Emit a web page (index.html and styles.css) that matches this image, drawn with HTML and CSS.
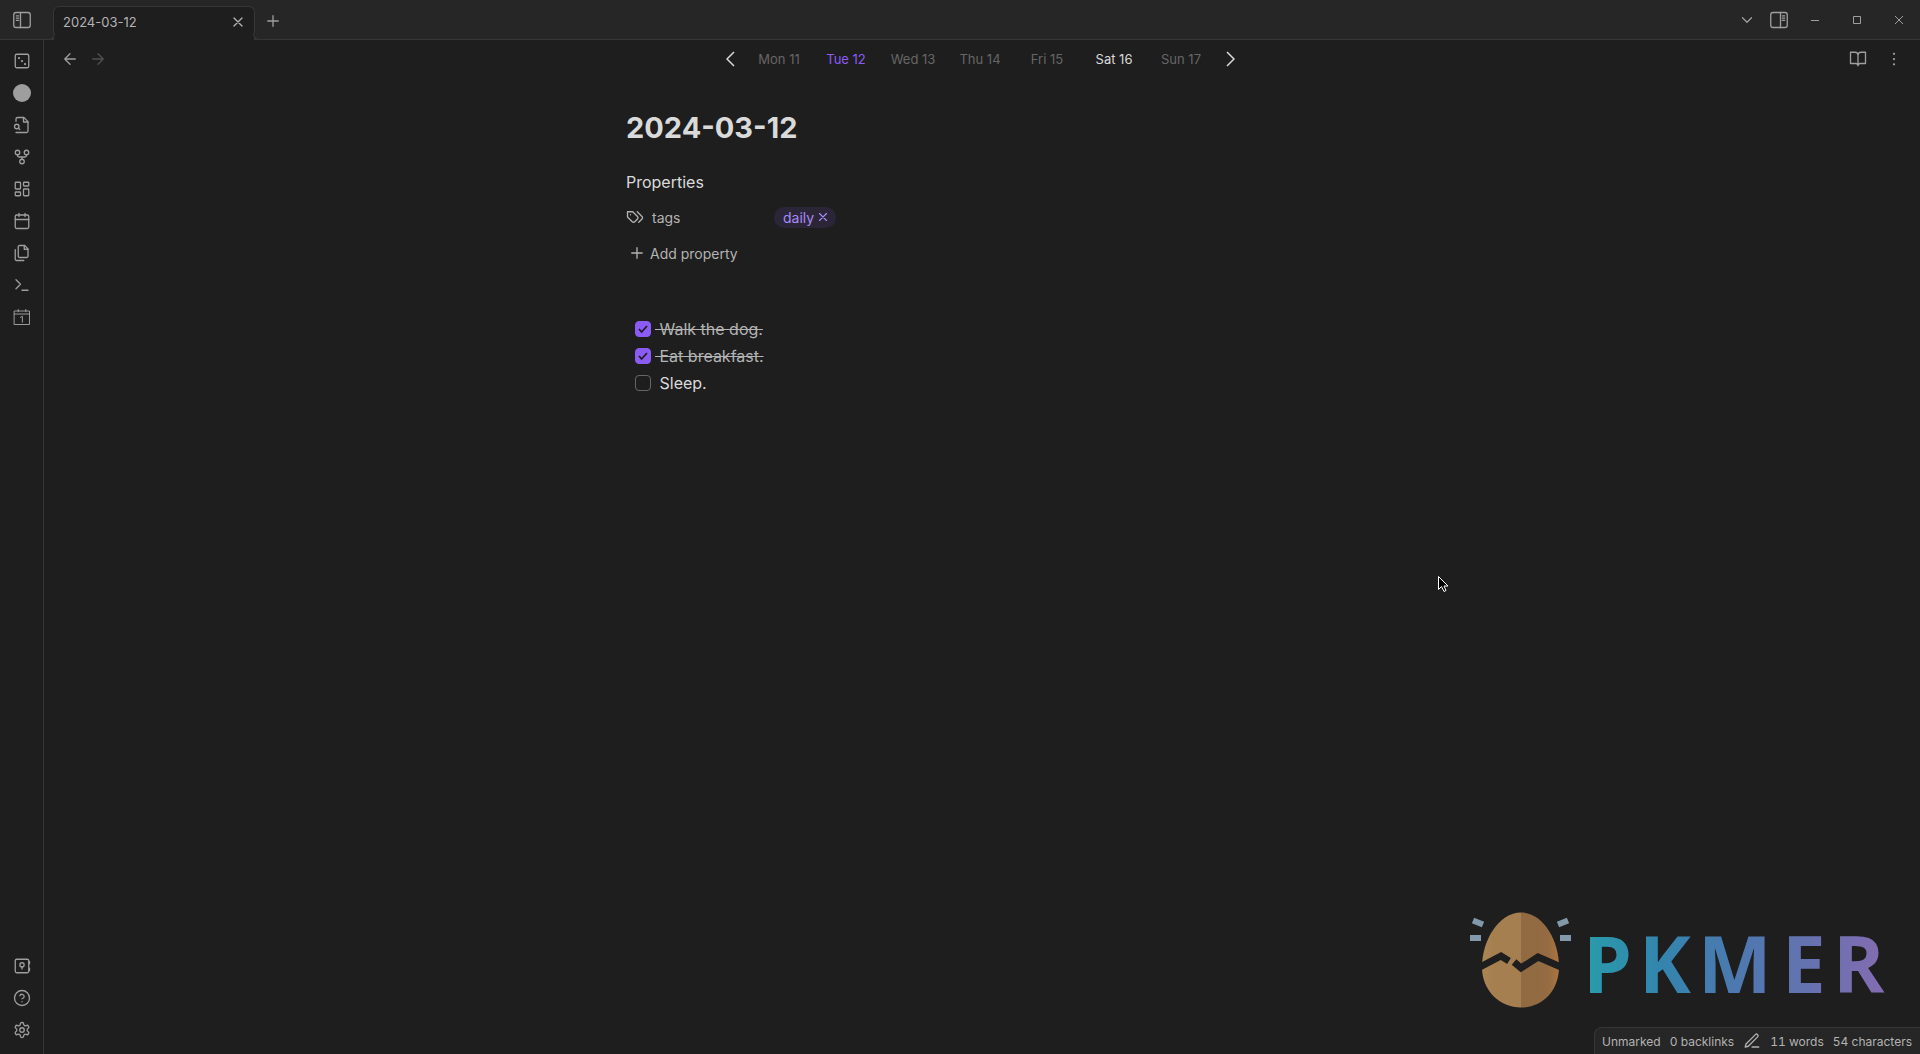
FILE: index.html
```html
<!DOCTYPE html>
<html lang="en">
<head>
  <meta charset="UTF-8" />
  <title>2024-03-12</title>
  <link rel="stylesheet" href="styles.css">
</head>
<body>
  <!-- Title bar -->
  <header class="titlebar">
    <div class="titlebar-left">
      <button class="icon-btn" aria-label="Toggle left sidebar">
        <svg class="icon" viewBox="0 0 24 24"><rect x="1" y="2" width="22" height="20" rx="3"/><path d="M10 2v20M4.5 6.5h3M4.5 9.5h3M4.5 12.5h3"/></svg>
      </button>
    </div>
    <div class="tab">
      <span class="tab-title">2024-03-12</span>
      <button class="icon-btn tab-close" aria-label="Close tab">
        <svg class="icon" viewBox="0 0 24 24"><path d="M18 6 6 18M6 6l12 12"/></svg>
      </button>
    </div>
    <button class="icon-btn new-tab" aria-label="New tab">
      <svg class="icon" viewBox="0 0 24 24"><path d="M5 12h14M12 5v14"/></svg>
    </button>
    <div class="titlebar-right">
      <div class="tab-tools">
        <button class="icon-btn" aria-label="Tab list">
          <svg class="icon" viewBox="0 0 24 24"><path d="m6 9 6 6 6-6"/></svg>
        </button>
        <button class="icon-btn" aria-label="Toggle right sidebar">
          <svg class="icon" viewBox="0 0 24 24"><rect x="1" y="2" width="22" height="20" rx="3"/><path d="M14 2v20M16.5 6.5h3M16.5 9.5h3M16.5 12.5h3"/></svg>
        </button>
      </div>
      <div class="window-controls">
        <button class="window-btn" aria-label="Minimize">
          <svg viewBox="0 0 10 10"><path d="M1 5.5h8"/></svg>
        </button>
        <button class="window-btn" aria-label="Maximize">
          <svg viewBox="0 0 10 10"><path d="M1.5 1.5h7v7h-7z"/></svg>
        </button>
        <button class="window-btn" aria-label="Close window">
          <svg viewBox="0 0 10 10"><path d="m1 1 8 8M9 1 1 9"/></svg>
        </button>
      </div>
    </div>
  </header>

  <div class="workspace">
    <!-- Ribbon -->
    <nav class="ribbon" aria-label="Ribbon">
      <div class="ribbon-group">
        <button class="icon-btn" aria-label="Open random note">
          <svg class="icon" viewBox="0 0 24 24"><rect x="3" y="3" width="18" height="18" rx="2"/><path class="dots" d="M8 8h.01M12 12h.01M16 16h.01"/></svg>
        </button>
        <button class="icon-btn" aria-label="Circle">
          <svg class="icon" viewBox="0 0 24 24"><circle class="solid" cx="12" cy="12" r="12"/></svg>
        </button>
        <button class="icon-btn" aria-label="Open quick switcher">
          <svg class="icon" viewBox="0 0 24 24"><path d="M4 22h14a2 2 0 0 0 2-2V7.5L14.5 2H6a2 2 0 0 0-2 2v3"/><path d="M14 2v6h6"/><circle cx="5" cy="14" r="3"/><path d="m9 18-1.5-1.5"/></svg>
        </button>
        <button class="icon-btn" aria-label="Open graph view">
          <svg class="icon" viewBox="0 0 24 24"><circle cx="12" cy="18" r="3"/><circle cx="6" cy="6" r="3"/><circle cx="18" cy="6" r="3"/><path d="M18 9v1a2 2 0 0 1-2 2H8a2 2 0 0 1-2-2V9M12 12v3"/></svg>
        </button>
        <button class="icon-btn" aria-label="Create new canvas">
          <svg class="icon" viewBox="0 0 24 24"><rect x="3" y="3" width="7" height="9" rx="1"/><rect x="14" y="3" width="7" height="5" rx="1"/><rect x="14" y="12" width="7" height="9" rx="1"/><rect x="3" y="16" width="7" height="5" rx="1"/></svg>
        </button>
        <button class="icon-btn" aria-label="Open today's daily note">
          <svg class="icon" viewBox="0 0 24 24"><rect x="3" y="4" width="18" height="18" rx="2"/><path d="M16 2v4M8 2v4M3 10h18"/></svg>
        </button>
        <button class="icon-btn" aria-label="Insert template">
          <svg class="icon" viewBox="0 0 24 24"><path d="M15.5 2H8.6c-.4 0-.8.2-1.1.5-.3.3-.5.7-.5 1.1v12.8c0 .4.2.8.5 1.1.3.3.7.5 1.1.5h9.8c.4 0 .8-.2 1.1-.5.3-.3.5-.7.5-1.1V6.5L15.5 2z"/><path d="M3 7.6v12.8c0 .4.2.8.5 1.1.3.3.7.5 1.1.5h9.8"/><path d="M15 2v5h5"/></svg>
        </button>
        <button class="icon-btn" aria-label="Open command palette">
          <svg class="icon" viewBox="0 0 24 24"><path d="m4 17 6-6-6-6M12 19h8"/></svg>
        </button>
        <button class="icon-btn" aria-label="Open periodic note">
          <svg class="icon thin" viewBox="0 0 24 24"><path d="M2 4h20v18H2zM2 8h20M7 2v3M17 2v3M10 12.5l2.5-1.5v8"/></svg>
        </button>
      </div>
      <div class="ribbon-group">
        <button class="icon-btn" aria-label="Open another vault">
          <svg class="icon" viewBox="0 0 24 24"><rect x="3" y="3" width="18" height="18" rx="2"/><path d="M22 6v3M22 15v3M12 13v3"/><circle cx="12" cy="10.5" r="2.8"/></svg>
        </button>
        <button class="icon-btn" aria-label="Help">
          <svg class="icon" viewBox="0 0 24 24"><circle cx="12" cy="12" r="10"/><path d="M9.09 9a3 3 0 0 1 5.83 1c0 2-3 3-3 3M12 17h.01"/></svg>
        </button>
        <button class="icon-btn" aria-label="Settings">
          <svg class="icon" viewBox="0 0 24 24"><path d="M12.22 2h-.44a2 2 0 0 0-2 2v.18a2 2 0 0 1-1 1.73l-.43.25a2 2 0 0 1-2 0l-.15-.08a2 2 0 0 0-2.73.73l-.22.38a2 2 0 0 0 .73 2.73l.15.1a2 2 0 0 1 1 1.72v.51a2 2 0 0 1-1 1.74l-.15.09a2 2 0 0 0-.73 2.73l.22.38a2 2 0 0 0 2.73.73l.15-.08a2 2 0 0 1 2 0l.43.25a2 2 0 0 1 1 1.73V20a2 2 0 0 0 2 2h.44a2 2 0 0 0 2-2v-.18a2 2 0 0 1 1-1.73l.43-.25a2 2 0 0 1 2 0l.15.08a2 2 0 0 0 2.73-.73l.22-.39a2 2 0 0 0-.73-2.73l-.15-.08a2 2 0 0 1-1-1.74v-.5a2 2 0 0 1 1-1.74l.15-.09a2 2 0 0 0 .73-2.73l-.22-.38a2 2 0 0 0-2.73-.73l-.15.08a2 2 0 0 1-2 0l-.43-.25a2 2 0 0 1-1-1.73V4a2 2 0 0 0-2-2z"/><circle cx="12" cy="12" r="3"/></svg>
        </button>
      </div>
    </nav>

    <main class="view">
      <div class="view-header">
        <div class="history">
          <button class="icon-btn" aria-label="Back">
            <svg class="icon" viewBox="0 0 24 24"><path d="m12 19-7-7 7-7M19 12H5"/></svg>
          </button>
          <button class="icon-btn" aria-label="Forward" disabled>
            <svg class="icon" viewBox="0 0 24 24"><path d="M5 12h14M12 5l7 7-7 7"/></svg>
          </button>
        </div>
        <nav class="days" aria-label="Daily notes">
          <button class="week-btn" aria-label="Previous week">
            <svg viewBox="0 0 10 16"><path d="M8 1 1 8l7 7"/></svg>
          </button>
          <a class="day" href="#">Mon 11</a>
          <a class="day active" href="#">Tue 12</a>
          <a class="day" href="#">Wed 13</a>
          <a class="day" href="#">Thu 14</a>
          <a class="day" href="#">Fri 15</a>
          <a class="day today" href="#">Sat 16</a>
          <a class="day" href="#">Sun 17</a>
          <button class="week-btn" aria-label="Next week">
            <svg viewBox="0 0 10 16"><path d="m2 1 7 7-7 7"/></svg>
          </button>
        </nav>
        <div class="view-actions">
          <button class="icon-btn" aria-label="Reading view">
            <svg class="icon" viewBox="0 0 24 24"><path d="M2 3h6a4 4 0 0 1 4 4v14a3 3 0 0 0-3-3H2zM22 3h-6a4 4 0 0 0-4 4v14a3 3 0 0 1 3-3h7z"/></svg>
          </button>
          <button class="icon-btn" aria-label="More options">
            <svg class="icon" viewBox="0 0 24 24"><path class="dots" d="M12 5h.01M12 12h.01M12 19h.01"/></svg>
          </button>
        </div>
      </div>

      <article class="note">
        <h1 class="note-title">2024-03-12</h1>
        <section class="properties">
          <h2 class="properties-title">Properties</h2>
          <div class="property">
            <span class="property-key">
              <svg class="icon" viewBox="0 0 24 24"><path d="M9 5H2v7l6.29 6.29c.94.94 2.48.94 3.42 0l3.58-3.58c.94-.94.94-2.48 0-3.42L9 5zM6 9.01V9M15 5l6.3 6.3a2.4 2.4 0 0 1 0 3.4L17 19"/></svg>
              tags
            </span>
            <span class="tag">daily
              <button class="tag-remove" aria-label="Remove daily">
                <svg class="icon" viewBox="0 0 24 24"><path d="M18 6 6 18M6 6l12 12"/></svg>
              </button>
            </span>
          </div>
          <button class="add-property">
            <svg class="icon" viewBox="0 0 24 24"><path d="M5 12h14M12 5v14"/></svg>
            Add property
          </button>
        </section>
        <ul class="tasks">
          <li><input type="checkbox" id="task1" checked><label for="task1"> Walk the dog.</label></li>
          <li><input type="checkbox" id="task2" checked><label for="task2"> Eat breakfast.</label></li>
          <li><input type="checkbox" id="task3"><label for="task3"> Sleep.</label></li>
        </ul>
      </article>
    </main>
  </div>

  <!-- Watermark -->
  <svg class="watermark" viewBox="0 -6 440 114" role="img" aria-label="PKMER">
    <defs>
      <linearGradient id="word" gradientUnits="userSpaceOnUse" x1="119" y1="0" x2="415" y2="0">
        <stop offset="0" stop-color="#2a9aab"/>
        <stop offset=".25" stop-color="#3484ae"/>
        <stop offset=".55" stop-color="#5277b0"/>
        <stop offset=".75" stop-color="#6672b0"/>
        <stop offset="1" stop-color="#846cb1"/>
      </linearGradient>
      <linearGradient id="shell" x1="0" y1="0" x2="1" y2="0">
        <stop offset="0" stop-color="#ab8753"/>
        <stop offset=".15" stop-color="#a67f50"/>
        <stop offset=".5" stop-color="#a67f50"/>
        <stop offset=".5" stop-color="#906a42"/>
        <stop offset=".85" stop-color="#946b42"/>
        <stop offset="1" stop-color="#ad7541"/>
      </linearGradient>
    </defs>
    <path fill="url(#shell)" d="M51 2.5C73 2.5 89 30 89 57c0 24-17 40.5-38 40.5S12 81 12 57C12 30 29 2.5 51 2.5z"/>
    <path class="crack" d="m10 57 21-11 8 5M44 52l7 6 17-11 23 10"/>
    <path class="spark" d="m3 10.5 10 4M0 28h11M88 14.500l10-4M90 28h11"/>
    <text class="wordmark" x="113 169 228 312 363" y="83">PKMER</text>
  </svg>

  <!-- Status bar -->
  <footer class="status-bar">
    <span>Unmarked</span>
    <span>0 backlinks</span>
    <button class="icon-btn" aria-label="Editing mode">
      <svg class="icon" viewBox="0 0 24 24"><path d="M12 20h9M16.5 3.5a2.12 2.12 0 0 1 3 3L7 19l-4 1 1-4z"/></svg>
    </button>
    <span>11 words</span>
    <span>54 characters</span>
  </footer>

  <svg class="cursor" viewBox="0 0 11 17"><path d="M.5.5v13l3-3 2.5 5 2-1-2-4.5h4z"/></svg>
</body>
</html>
```
FILE: styles.css
```css
* {
  box-sizing: border-box;
}

body {
  margin: 0;
  height: 100vh;
  display: flex;
  flex-direction: column;
  overflow: hidden;
  background: #1e1e1e;
  color: #dadada;
  font-family: Inter, sans-serif;
  font-size: 16px;
}

button {
  margin: 0;
  padding: 0;
  border: none;
  background: none;
  color: inherit;
  font: inherit;
}

svg {
  display: block;
  fill: none;
  stroke: currentColor;
}

.icon {
  width: 18px;
  height: 18px;
  stroke-width: 1.75px;
  stroke-linecap: round;
  stroke-linejoin: round;
}

.icon.thin {
  stroke-width: 1.3px;
}

.dots {
  stroke-width: 3px;
}

.solid {
  fill: currentColor;
  stroke: none;
}

.icon-btn {
  display: flex;
  align-items: center;
  justify-content: center;
  color: #9e9e9e;
}

.icon-btn:disabled {
  color: #505050;
}

/* Title bar */
.titlebar {
  height: 40px;
  display: flex;
  align-items: stretch;
  background: #262626;
  box-shadow: inset 0 -1px #363636;
}

.titlebar-left {
  width: 53px;
  padding-left: 13px;
  display: flex;
}

.tab {
  position: relative;
  width: 202px;
  margin-top: 6px;
  padding: 0 8px 4px 9px;
  display: flex;
  align-items: center;
  justify-content: space-between;
  background: #1e1e1e;
  border: 1px solid #363636;
  border-bottom: none;
  border-radius: 6px 6px 0 0;
}

/* curved feet of the tab */
.tab::before,
.tab::after {
  content: "";
  position: absolute;
  bottom: 0;
  width: 6px;
  height: 6px;
  border: 1px solid #363636;
  border-top: none;
  background: #262626;
}

.tab::before {
  left: -6px;
  border-left: none;
  border-bottom-right-radius: 6px;
}

.tab::after {
  right: -6px;
  border-right: none;
  border-bottom-left-radius: 6px;
}

.tab-title {
  font-size: 13px;
  color: #b3b3b3;
}

.tab-close {
  color: #b3b3b3;
}

.tab-close .icon {
  width: 16px;
  height: 16px;
  stroke-width: 2px;
}

.new-tab {
  width: 36px;
  padding-top: 2px;
}

.titlebar-right {
  margin-left: auto;
  display: flex;
  gap: 6px;
}

.tab-tools {
  display: flex;
  gap: 14px;
}

.window-controls {
  display: flex;
}

.window-btn {
  width: 42px;
  display: flex;
  align-items: center;
  justify-content: center;
  color: #9e9e9e;
}

.window-btn svg {
  width: 10px;
  height: 10px;
}

/* Layout under the title bar */
.workspace {
  flex: 1;
  display: flex;
  min-height: 0;
}

.ribbon {
  width: 44px;
  padding: 9px 0 12px;
  display: flex;
  flex-direction: column;
  justify-content: space-between;
  border-right: 1px solid #363636;
}

.ribbon-group {
  display: flex;
  flex-direction: column;
  gap: 8px;
}

.ribbon .icon-btn {
  height: 24px;
}

.view {
  flex: 1;
}

.view-header {
  height: 38px;
  padding: 0 17px;
  display: grid;
  grid-template-columns: 1fr auto 1fr;
  align-items: center;
}

.history {
  display: flex;
  gap: 10px;
}

.view-actions {
  display: flex;
  justify-content: flex-end;
  gap: 18px;
}

.days {
  margin-right: 4px;
  display: flex;
  align-items: center;
}

.day {
  width: 67px;
  text-align: center;
  font-size: 13px;
  color: #666;
  text-decoration: none;
}

.day.active {
  color: #8a5cf5;
}

.day.today {
  color: #dadada;
}

.week-btn {
  width: 30px;
  display: flex;
  justify-content: center;
}

.week-btn svg {
  width: 10px;
  height: 16px;
  stroke-width: 1.5px;
}

/* Note */
.note {
  padding: 32px 32px 0 20px;
  max-width: 752px;
  margin: 0 auto;
}

.note-title {
  margin: 0;
  font-size: 29px;
  line-height: 36px;
  font-weight: 700;
}

.properties {
  margin: 24px 0 0;
}

.properties-title {
  margin: 0 0 5px;
  font-size: 16px;
  font-weight: 400;
  line-height: 24px;
}

.property {
  height: 36px;
  display: flex;
  align-items: center;
  font-size: 14px;
}

.property-key {
  width: 148px;
  display: flex;
  align-items: center;
  gap: 8px;
  color: #b3b3b3;
}

.tag {
  height: 21px;
  padding: 0 6px 0 9px;
  display: flex;
  align-items: center;
  gap: 2px;
  border-radius: 11px;
  background: #2b2637;
  color: #a68af9;
}

.tag-remove .icon {
  width: 14px;
  height: 14px;
  stroke-width: 2px;
}

.add-property {
  height: 36px;
  padding-left: 2px;
  display: flex;
  align-items: center;
  gap: 4px;
  font-size: 14px;
  color: #b3b3b3;
}

.tasks {
  margin: 44px 0 0;
  padding: 0 0 0 9px;
  list-style: none;
}

.tasks li {
  height: 27px;
  display: flex;
  align-items: center;
}

.tasks input {
  appearance: none;
  width: 16px;
  height: 16px;
  margin: 0 4px 0 0;
  border: 1px solid #666;
  border-radius: 4px;
}

.tasks input:checked {
  border-color: #8a5cf5;
  background: #8a5cf5 url("data:image/svg+xml,%3Csvg xmlns='http://www.w3.org/2000/svg' viewBox='0 0 14 14'%3E%3Cpath d='m3 7 2.6 3 5.4-6' fill='none' stroke='%231e1e1e' stroke-width='1.8'/%3E%3C/svg%3E") center / 14px;
}

.tasks label {
  white-space: pre;
}

.tasks input:checked + label {
  color: #b3b3b3;
  text-decoration: line-through;
}

/* Overlays */
.watermark {
  position: absolute;
  right: 10px;
  bottom: 36px;
  width: 440px;
  height: 114px;
  stroke: none;
}

.crack {
  stroke: #1e1e1e;
  stroke-width: 7px;
}

.spark {
  stroke: #8299ab;
  stroke-width: 6px;
}

.wordmark {
  fill: url(#word);
  font-family: "Open Sans", sans-serif;
  font-size: 78px;
  font-weight: 700;
}

.status-bar {
  position: absolute;
  right: 0;
  bottom: 0;
  height: 27px;
  padding: 0 8px 0 7px;
  display: flex;
  align-items: center;
  gap: 9px;
  border: 1px solid #363636;
  border-width: 1px 0 0 1px;
  border-radius: 8px 0 0 0;
  background: #262626;
  color: #b3b3b3;
  font-size: 12px;
  font-variant-numeric: tabular-nums;
}

.status-bar .icon-btn {
  color: #b3b3b3;
}

.cursor {
  position: absolute;
  left: 1438px;
  top: 576px;
  width: 11px;
  height: 17px;
  fill: #000;
  stroke: #fff;
}
```
